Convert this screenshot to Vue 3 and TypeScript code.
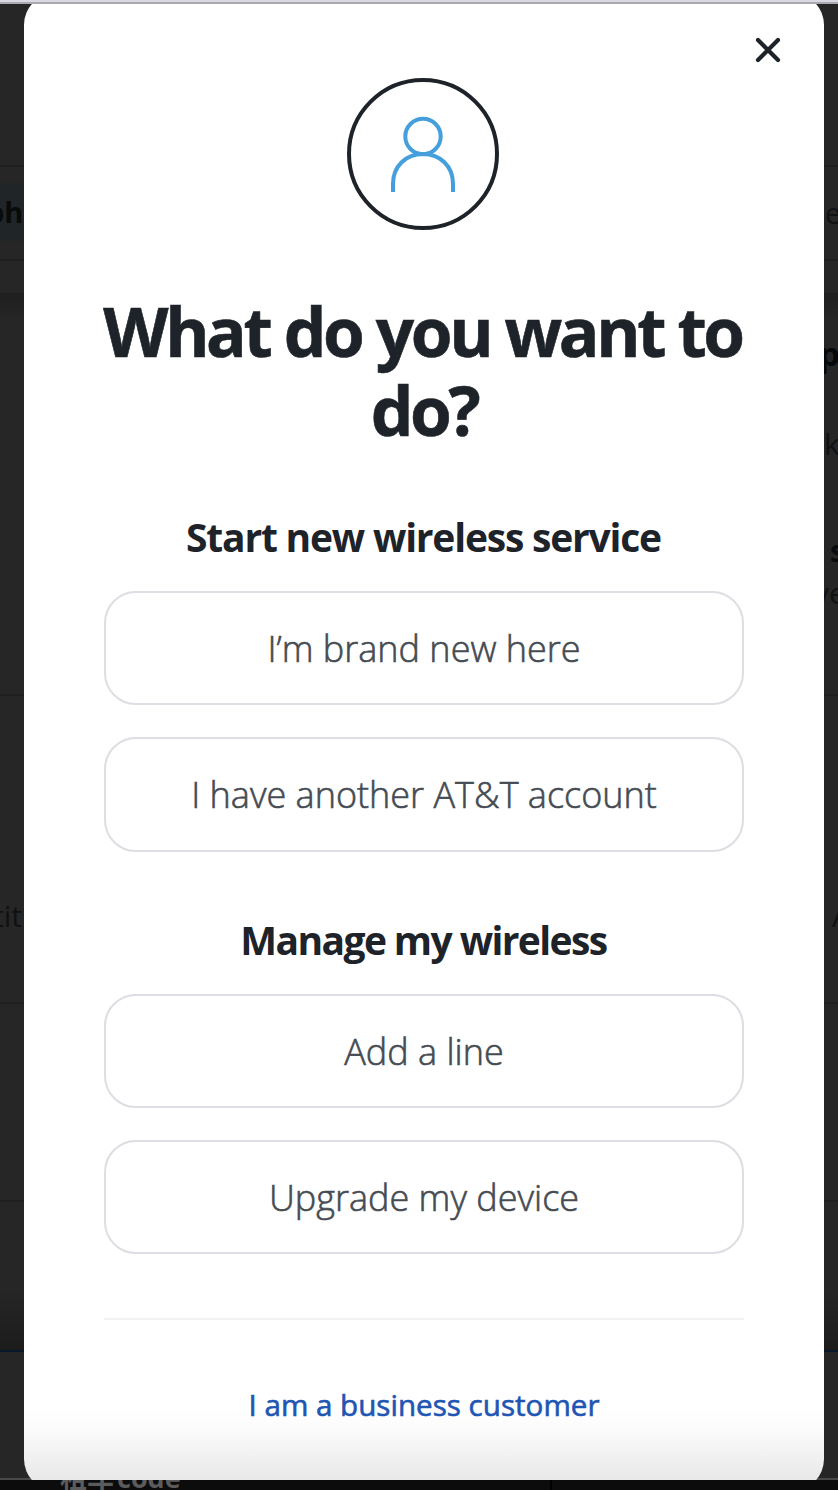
<script setup lang="ts">
interface Option {
  id: string
  label: string
}
interface Group {
  title: string
  options: Option[]
}

const groups: Group[] = [
  {
    title: 'Start new wireless service',
    options: [
      { id: 'new', label: 'I’m brand new here' },
      { id: 'existing', label: 'I have another AT&T account' },
    ],
  },
  {
    title: 'Manage my wireless',
    options: [
      { id: 'add', label: 'Add a line' },
      { id: 'upgrade', label: 'Upgrade my device' },
    ],
  },
]
</script>

<template>
  <div class="screen">
    <div class="topbar"></div>
    <div class="viewport">
      <div class="backdrop">
        <div class="band b1"></div>
        <div class="band b2"><span class="peek ph">ph</span><span class="peek re">Re</span></div>
        <div class="band b3"></div>
        <div class="band b4"></div>
        <div class="band b5"><span class="peek p">p</span><span class="peek k">k</span><span class="peek s">s</span><span class="peek ve">ve</span></div>
        <div class="band b6"><span class="peek tit">tit</span><span class="peek a">A</span></div>
        <div class="band b7"></div>
        <div class="band b8"></div>
        <div class="band b9"></div>
      </div>
      <main class="card" role="dialog" aria-modal="true">
        <button class="close" aria-label="Close">
          <svg width="26" height="26" viewBox="0 0 26 26"><path d="M3 3 23 23M23 3 3 23" /></svg>
        </button>
        <svg class="avatar" width="152" height="152" viewBox="0 0 152 152">
          <circle class="ring" cx="76" cy="76" r="74" />
          <g class="person">
            <circle cx="76" cy="58.5" r="17.7" />
            <path d="M46 114V106C46 88 59 76 76 76S106 88 106 106V114" />
          </g>
        </svg>
        <h1>What do you want to do?</h1>
        <section v-for="(g, i) in groups" :key="g.title" :class="'g' + i">
          <h2>{{ g.title }}</h2>
          <button v-for="o in g.options" :key="o.id" class="option" :class="o.id">{{ o.label }}</button>
        </section>
        <hr />
        <a class="business">I am a business customer</a>
      </main>
    </div>
    <div class="bottombar"><span class="caption">租车 code</span></div>
  </div>
</template>

<style>
html, body { margin: 0; background: #0c0c0c; }
</style>

<style scoped>
.screen { width: 838px; height: 1490px; display: flex; flex-direction: column; overflow: hidden; font-family: "Open Sans", "Noto Sans CJK SC", sans-serif; color: #1d2329; }
.topbar { height: 2px; flex: none; background: #d8d9e2; border-bottom: 2px solid #a9a9af; }
.viewport { position: relative; height: 1476px; flex: none; overflow: hidden; background: #262626; }
.backdrop { position: absolute; inset: 0; display: flex; flex-direction: column; color: #101112; }
.band { position: relative; flex: none; box-sizing: border-box; border-bottom: 2px solid #202020; }
.b1 { height: 163px; }
.b2 { height: 94px; background: linear-gradient(#202627, #202627) 0 16px / 24px 58px no-repeat; }
.b3 { height: 32px; border: 0; }
.b4 { height: 28px; border: 0; background: linear-gradient(#1f1f1f, #262626); }
.b5 { height: 375px; }
.b6 { height: 308px; }
.b7 { height: 198px; }
.b8 { height: 150px; border-bottom-color: #07182a; background: linear-gradient(#262626 60%, #1c1c1c); }
.b9 { height: 128px; border-bottom-color: #4a4a4a; }
.peek { position: absolute; line-height: 40px; font-size: 30px; white-space: nowrap; }
.ph { left: -14px; top: 25px; font-weight: 700; font-size: 29px; color: #090b0b; }
.re { left: 807px; top: 26px; font-size: 29px; }
.p { left: 819px; top: 13px; font-weight: 700; font-size: 33px; color: #060809; }
.k { left: 824px; top: 103px; }
.s { left: 830px; top: 210px; font-weight: 700; color: #090b0c; }
.ve { left: 814px; top: 252px; }
.tit { right: 816px; top: 200px; }
.a { left: 832px; top: 200px; }
.card { position: absolute; left: 24px; top: -11px; width: 800px; height: 1498px; box-sizing: border-box; padding: 85px 80px 0; border-radius: 32px; display: flex; flex-direction: column; align-items: center; background: linear-gradient(#fff 1410px, #fcfcfc 1434px, #e8e8e8 1487px); }
.close { position: absolute; right: 43px; top: 44px; width: 26px; height: 26px; padding: 0; border: 0; background: none; }
.close svg { display: block; fill: none; stroke: #1d2329; stroke-width: 4.2; stroke-linecap: round; }
.avatar { flex: none; margin-left: -2px; fill: none; }
.ring { stroke: #1d2329; stroke-width: 4; }
.person { stroke: #459fdc; stroke-width: 4; }
h1 { margin: 62px -20px 0; width: 680px; height: 160px; font-size: 67.5px; line-height: 79px; font-weight: 700; letter-spacing: -3.4px; word-spacing: 0.2px; text-indent: -3px; text-align: center; -webkit-text-stroke: 0.6px #1d2329; }
section { display: flex; flex-direction: column; width: 640px; }
h2 { margin: 0; height: 48px; font-size: 39px; line-height: 48px; font-weight: 700; letter-spacing: -1.2px; text-align: center; white-space: nowrap; text-indent: -1px; }
.g0 { margin-top: 61px; }
.g1 { margin-top: 64px; }
.g1 h2 { letter-spacing: -1.6px; }
.option { height: 114px; box-sizing: border-box; padding: 1px 0 0; border: 2px solid #dddde3; border-radius: 32px; background: #fff; color: #454b52; font: 300 36px/48px "Open Sans", sans-serif; -webkit-text-stroke: 0.6px #454b52; white-space: nowrap; }
.option.existing { height: 115px; }
h2 + .option { margin-top: 30px; }
.option + .option { margin-top: 32px; }
hr { width: 640px; height: 2px; margin: 64px 0 0; border: 0; flex: none; background: #f2f2f2; }
.business { margin-top: 65px; font-size: 29.6px; line-height: 40px; font-weight: 400; -webkit-text-stroke: 0.6px #2055b3; color: #2055b3; white-space: nowrap; }
.bottombar { position: relative; height: 10px; flex: none; overflow: hidden; background: linear-gradient(90deg, #0c0c0c 550px, #000 550px, #000 552px, #0c0c0c 552px); }
.caption { position: absolute; left: 60px; top: -22px; font: 700 27px/40px "Open Sans", "Noto Sans CJK SC", sans-serif; color: #5b5b5b; word-spacing: -4px; white-space: nowrap; }
</style>
